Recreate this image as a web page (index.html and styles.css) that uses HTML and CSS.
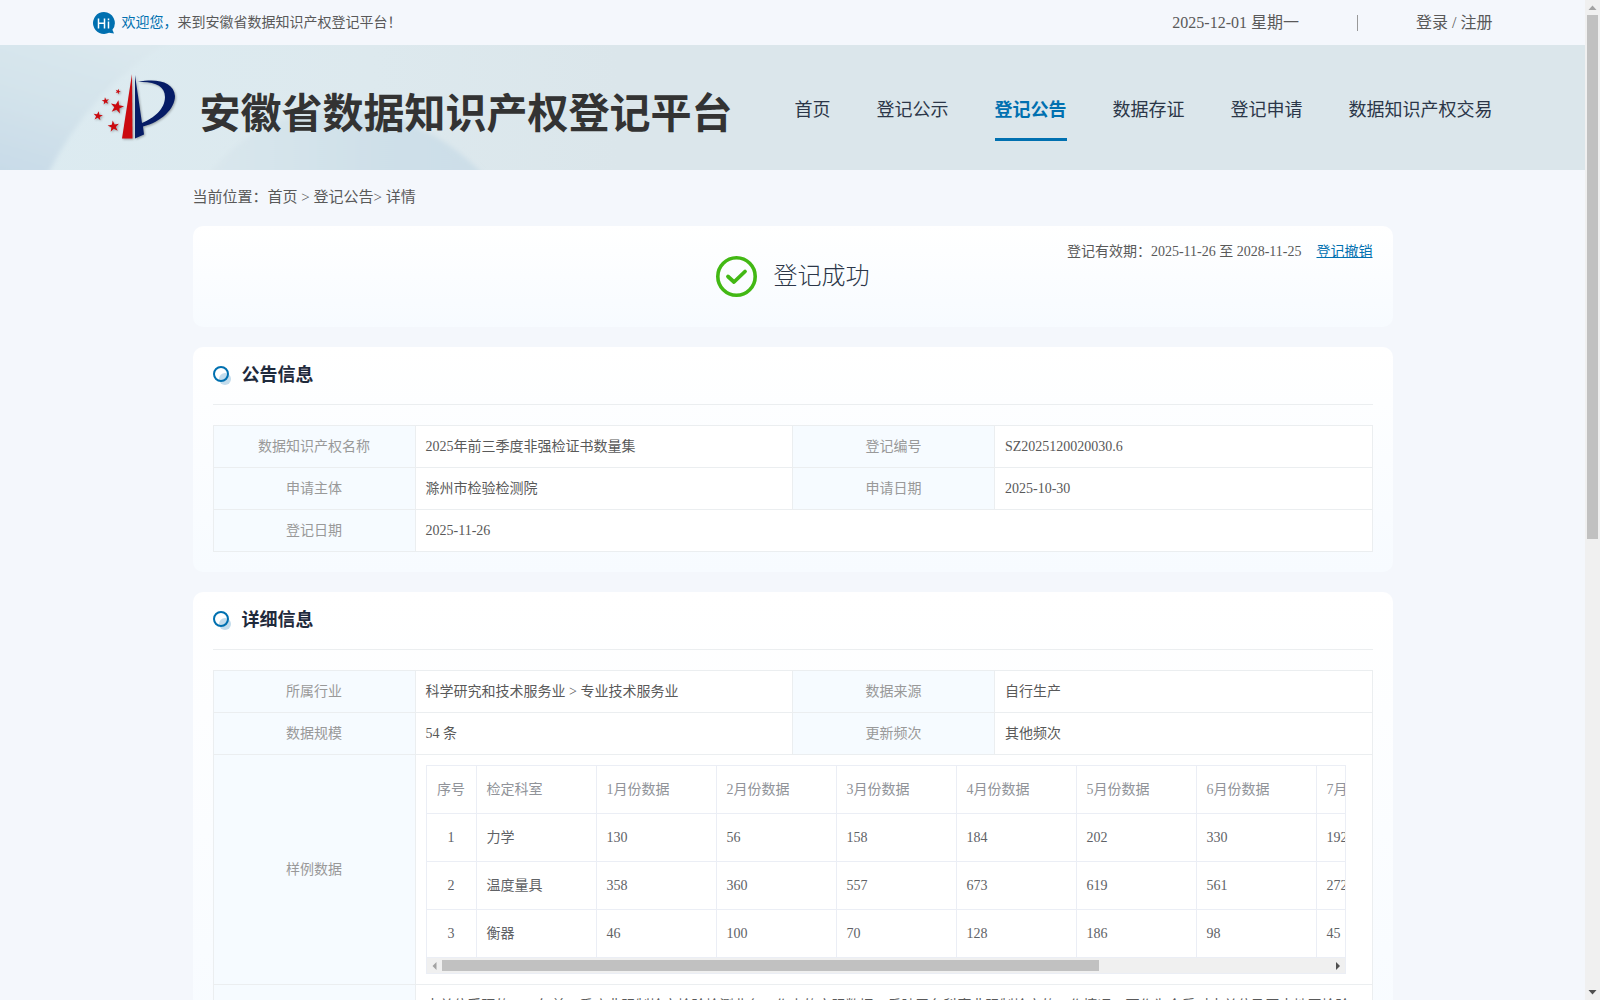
FILE: index.html
```html
<!DOCTYPE html>
<html lang="zh-CN">
<head>
    <meta charset="UTF-8">
    <meta name="viewport" content="width=device-width, initial-scale=1.0">
    <title>安徽省数据知识产权登记平台</title>
    <link rel="stylesheet" href="styles.css">
</head>
<body>
    <div class="page">
        <div class="topbar">
            <div class="inner topbar-inner">
                <div class="welcome">
                    <svg class="hi-icon" viewBox="0 0 22 22" aria-hidden="true">
                        <path d="M11 0a11 11 0 1 0 5 20.800l5 .7-1.600-3.700A11 11 0 0 0 11 0z" fill="#0070b0"/>
                        <path d="M5.500 6.500v10M11.500 6.500v10M5.500 11.300h6M15.500 9.500v7M15.500 6.500v1.700" stroke="#fff" stroke-width="1.500" fill="none"/>
                    </svg>
                    <p><span class="blue">欢迎您，</span>来到安徽省数据知识产权登记平台！</p>
                </div>
                <div class="top-right">
                    <span>2025-12-01 星期一</span>
                    <span class="sep"></span>
                    <span><a href="#">登录</a> / <a href="#">注册</a></span>
                </div>
            </div>
        </div>

        <header class="header">
            <svg class="header-bg" viewBox="0 0 620 125" aria-hidden="true">
                <defs>
                    <linearGradient id="bgLeft" x1=".6" y1="0" x2=".2" y2="1">
                        <stop offset="0" stop-color="#dbe8ee"/>
                        <stop offset=".5" stop-color="#d3e3eb"/>
                        <stop offset="1" stop-color="#c8dbe8"/>
                    </linearGradient>
                    <linearGradient id="bgMid" x1="0" y1="0" x2="1" y2="0">
                        <stop offset="0" stop-color="#dcebf1"/>
                        <stop offset=".6" stop-color="#dde9ee"/>
                        <stop offset="1" stop-color="#dbe6eb"/>
                    </linearGradient>
                    <linearGradient id="bgDome" x1="0" y1="0" x2="1" y2="0">
                        <stop offset="0" stop-color="#dae7ed"/>
                        <stop offset=".6" stop-color="#cfe0e9"/>
                        <stop offset="1" stop-color="#ccdee8"/>
                    </linearGradient>
                    <filter id="soft"><feGaussianBlur stdDeviation="2.500"/></filter>
                </defs>
                <rect width="620" height="125" fill="url(#bgMid)"/>
                <path d="M-10-10h190Q90 40 45 135H-10z" fill="url(#bgLeft)" filter="url(#soft)"/>
                <path d="M205 135C240 85 290 66 335 66S440 80 488 135z" fill="url(#bgDome)" filter="url(#soft)"/>
            </svg>
            <div class="inner header-inner">
                <a class="logo" href="#">
                    <svg class="logo-mark" viewBox="0 0 84 68" aria-hidden="true">
                        <defs>
                            <path id="star" d="M0-7 1.700-2.200 6.700-2.200 2.600.9 4.200 5.700 0 2.700-4.200 5.700-2.600.9-6.700-2.200-1.700-2.200z"/>
                        </defs>
                        <path d="M39 0 29 64.500H39.500z" fill="#cb0a0f"/>
                        <path d="M42 1V64.500L51 60.500 50 52.500C68 48 82 35 82 22 81 8 64 4 45 8 62 7 72 12 72 23 72 35 61 44 49 49z" fill="#061c66"/>
                        <g fill="#cb0a0f">
                            <use href="#star" transform="translate(24 33) rotate(12)"/>
                            <use href="#star" transform="translate(20.500 52.500) rotate(-8) scale(.85)"/>
                            <use href="#star" transform="translate(5 42) rotate(8) scale(.7)"/>
                            <use href="#star" transform="translate(12.500 27) rotate(-8) scale(.55)"/>
                            <use href="#star" transform="translate(25 17.500) rotate(20) scale(.4)"/>
                        </g>
                    </svg>
                    <span class="logo-text">安徽省数据知识产权登记平台</span>
                </a>
                <nav class="nav">
                    <a href="#">首页</a>
                    <a href="#">登记公示</a>
                    <a class="active" href="#">登记公告</a>
                    <a href="#">数据存证</a>
                    <a href="#">登记申请</a>
                    <a href="#">数据知识产权交易</a>
                </nav>
            </div>
        </header>

        <main class="main">
            <div class="crumb">当前位置：<a href="#">首页</a> &gt; <a href="#">登记公告</a>&gt; 详情</div>

            <section class="card result">
                <div class="result-status">
                    <svg class="ok-icon" viewBox="0 0 41 41" aria-hidden="true">
                        <circle cx="20.500" cy="20.500" r="18.700" fill="none" stroke="#42b814" stroke-width="3.600"/>
                        <path d="M12 20.500l6 5.500L29 15.500" fill="none" stroke="#42b814" stroke-width="3.800" stroke-linecap="round" stroke-linejoin="round"/>
                    </svg>
                    <span>登记成功</span>
                </div>
                <div class="result-date">
                    <span>登记有效期：2025-11-26 至 2028-11-25</span>
                    <a href="#">登记撤销</a>
                </div>
            </section>

            <section class="card">
                <h2 class="card-title">
                    <svg class="dot-icon" viewBox="0 0 18 19" aria-hidden="true">
                        <circle cx="12" cy="13" r="6" fill="#c3dcec"/>
                        <circle cx="8" cy="8" r="7" fill="none" stroke="#0070b0" stroke-width="2"/>
                    </svg>
                    公告信息
                </h2>
                <table class="info">
                    <colgroup><col class="col-label"><col><col class="col-label"><col></colgroup>
                    <tr>
                        <th>数据知识产权名称</th>
                        <td>2025年前三季度非强检证书数量集</td>
                        <th>登记编号</th>
                        <td>SZ2025120020030.6</td>
                    </tr>
                    <tr>
                        <th>申请主体</th>
                        <td>滁州市检验检测院</td>
                        <th>申请日期</th>
                        <td>2025-10-30</td>
                    </tr>
                    <tr>
                        <th>登记日期</th>
                        <td colspan="3">2025-11-26</td>
                    </tr>
                </table>
            </section>

            <section class="card">
                <h2 class="card-title">
                    <svg class="dot-icon" viewBox="0 0 18 19" aria-hidden="true">
                        <circle cx="12" cy="13" r="6" fill="#c3dcec"/>
                        <circle cx="8" cy="8" r="7" fill="none" stroke="#0070b0" stroke-width="2"/>
                    </svg>
                    详细信息
                </h2>
                <table class="info">
                    <colgroup><col class="col-label"><col><col class="col-label"><col></colgroup>
                    <tr>
                        <th>所属行业</th>
                        <td>科学研究和技术服务业 &gt; 专业技术服务业</td>
                        <th>数据来源</th>
                        <td>自行生产</td>
                    </tr>
                    <tr>
                        <th>数据规模</th>
                        <td>54 条</td>
                        <th>更新频次</th>
                        <td>其他频次</td>
                    </tr>
                    <tr>
                        <th>样例数据</th>
                        <td colspan="3">
                            <div class="sample-wrap">
                                <table class="sample">
                                    <tr><th>序号</th><th>检定科室</th><th>1月份数据</th><th>2月份数据</th><th>3月份数据</th><th>4月份数据</th><th>5月份数据</th><th>6月份数据</th><th>7月份数据</th></tr>
                                    <tr><td>1</td><td>力学</td><td>130</td><td>56</td><td>158</td><td>184</td><td>202</td><td>330</td><td>192</td></tr>
                                    <tr><td>2</td><td>温度量具</td><td>358</td><td>360</td><td>557</td><td>673</td><td>619</td><td>561</td><td>272</td></tr>
                                    <tr><td>3</td><td>衡器</td><td>46</td><td>100</td><td>70</td><td>128</td><td>186</td><td>98</td><td>45</td></tr>
                                </table>
                                <div class="bar bar-x" aria-hidden="true">
                                    <svg class="arrow" viewBox="0 0 15 15"><path d="M9.500 4v8l-4-4z" fill="#a3a3a3"/></svg>
                                    <div class="track"><div class="thumb"></div></div>
                                    <svg class="arrow" viewBox="0 0 15 15"><path d="M6 4v8l4-4z" fill="#505050"/></svg>
                                </div>
                            </div>
                        </td>
                    </tr>
                    <tr>
                        <th>应用场景</th>
                        <td colspan="3">本单位受理的2025年前三季度非强制检定检验检测业务工作中的实际数据，反映了各科室非强制检定的工作情况，可作为今后对本单位乃至本地区检验检测业务工作的参考。</td>
                    </tr>
                </table>
            </section>
        </main>
    </div>

    <div class="bar bar-y" aria-hidden="true">
        <svg class="arrow" viewBox="0 0 15 15"><path d="M3.500 10h8l-4-4.500z" fill="#a3a3a3"/></svg>
        <div class="track"><div class="thumb"></div></div>
        <svg class="arrow" viewBox="0 0 15 15"><path d="M3.500 5h8l-4 4.500z" fill="#505050"/></svg>
    </div>
</body>
</html>
```
FILE: styles.css
```css
:root {
    --blue: #0070b0;
    --text: #595959;
    --line: #ebeef0;
}

* {
    box-sizing: border-box;
}

body {
    display: flex;
    height: 100vh;
    margin: 0;
    font-family: "Liberation Serif", "Noto Sans CJK SC", serif;
    font-size: 14px;
    line-height: 21px;
    color: var(--text);
    background: #f4f7fc;
}

a {
    color: inherit;
    text-decoration: none;
}

p {
    margin: 0;
}

.page {
    flex: 1;
    min-width: 0;
    overflow: hidden auto;
    scrollbar-width: none;
}

.inner {
    max-width: 1400px;
    margin: 0 auto;
    display: flex;
    align-items: center;
    justify-content: space-between;
}

/* 顶部栏 */
.topbar-inner {
    height: 45px;
}

.welcome {
    display: flex;
    align-items: center;
    gap: 7px;
}

.hi-icon {
    width: 22px;
    height: 22px;
}

.blue {
    color: var(--blue);
}

.top-right {
    display: flex;
    align-items: center;
    font-size: 16px;
}

.sep {
    width: 1px;
    height: 16px;
    margin: 0 58px;
    background: #999;
}

/* 头部导航 */
.header {
    position: relative;
    background: #dbe6eb;
}

.header-bg {
    position: absolute;
    left: 0;
    top: 0;
    height: 100%;
}

.header-inner {
    position: relative;
    height: 125px;
}

.logo {
    display: flex;
    align-items: center;
    gap: 23px;
}

.logo-mark {
    width: 84px;
    height: 68px;
    filter: drop-shadow(1px 1px 1px rgba(0, 0, 0, 0.3));
}

.logo-text {
    padding-top: 12px;
    font-size: 41px;
    line-height: 60px;
    font-weight: 700;
    color: #333;
    white-space: nowrap;
}

.nav {
    display: flex;
    gap: 46px;
    font-size: 18px;
    color: #2b3648;
    white-space: nowrap;
}

.nav a {
    padding: 22px 0 14px;
    line-height: 28px;
    border-bottom: 3px solid transparent;
}

.nav .active {
    color: var(--blue);
    font-weight: 700;
    border-color: var(--blue);
}

/* 内容 */
.main {
    max-width: 1200px;
    margin: 0 auto;
}

.crumb {
    height: 56px;
    line-height: 55px;
    font-size: 15px;
}

.card {
    margin-bottom: 20px;
    padding: 0 20px 20px;
    border-radius: 10px;
    background: linear-gradient(#fff, #f7fbff);
}

.result {
    display: grid;
    grid-template-columns: 1fr auto 1fr;
    padding: 0 20px;
}

.result-status {
    grid-column: 2;
    display: flex;
    align-items: center;
    gap: 17px;
    padding: 30px 0;
    font-size: 24px;
    font-weight: 300;
    color: #2b3648;
}

.ok-icon {
    width: 41px;
    height: 41px;
}

.result-date {
    display: flex;
    justify-content: flex-end;
    gap: 15px;
    padding-top: 15px;
    white-space: nowrap;
}

.result-date a {
    color: var(--blue);
    text-decoration: underline;
}

.card-title {
    display: flex;
    align-items: center;
    gap: 11px;
    height: 58px;
    margin: 0 0 20px;
    font-size: 18px;
    font-weight: 700;
    color: #1f2a3c;
    border-bottom: 1px solid var(--line);
}

.dot-icon {
    width: 18px;
    height: 19px;
}

table {
    border-collapse: collapse;
    table-layout: fixed;
}

.info {
    width: 100%;
    background: #fff;
}

.info th,
.info td {
    padding: 10px;
    border: 1px solid var(--line);
    text-align: left;
}

.info th {
    font-weight: 400;
    color: #999;
    text-align: center;
    background: #f6fbff;
}

.col-label {
    width: 202px;
}

/* 样例数据 */
.sample-wrap {
    max-width: 920px;
    border: 1px solid #ebeef5;
    overflow: hidden;
}

.info .sample {
    width: 1010px;
    border-collapse: separate;
    border-spacing: 0;
}

.info .sample th,
.info .sample td {
    width: 120px;
    height: 48px;
    border-width: 0 1px 1px 0;
    border-color: #ebeef5;
    color: #606266;
}

.info .sample th {
    color: #909399;
    text-align: left;
    background: none;
}

.info .sample th:first-child,
.info .sample td:first-child {
    width: 50px;
    text-align: center;
}

/* 滚动条 */
.bar {
    display: flex;
    background: #f0f0f0;
}

.bar .arrow {
    flex: none;
    width: 15px;
    height: 15px;
}

.bar .track {
    flex: 1;
}

.bar .thumb {
    background: #c1c1c1;
}

.bar-x {
    height: 15px;
}

.bar-x .track {
    padding: 2px 0;
}

.bar-x .thumb {
    width: 74%;
    height: 11px;
}

.bar-y {
    flex: none;
    flex-direction: column;
    width: 15px;
}

.bar-y .track {
    padding: 0 2px;
}

.bar-y .thumb {
    height: 54%;
}
```
